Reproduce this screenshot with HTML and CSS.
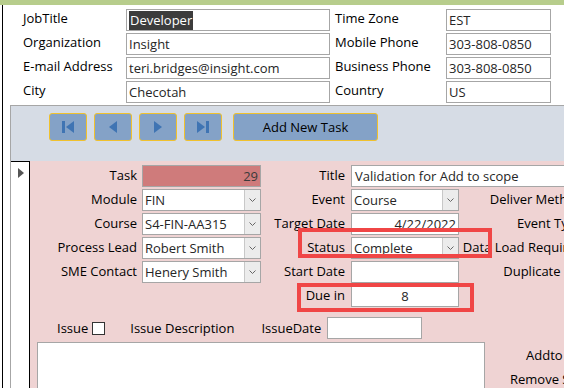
FILE: index.html
```html
<!DOCTYPE html>
<html lang="en">
<head>
  <meta charset="UTF-8">
  <title>Contact Tasks</title>
  <link rel="stylesheet" href="styles.css">
</head>
<body>
  <div class="topbar"></div>
  <div class="window">

    <!-- Contact details -->
    <div class="contact">
      <div class="label">JobTitle</div>
      <div class="field"><span class="selected">Developer</span></div>
      <div class="label label-right">Time Zone</div>
      <div class="field">EST</div>

      <div class="label">Organization</div>
      <div class="field">Insight</div>
      <div class="label label-right">Mobile Phone</div>
      <div class="field">303-808-0850</div>

      <div class="label">E-mail Address</div>
      <div class="field">teri.bridges@insight.com</div>
      <div class="label label-right">Business Phone</div>
      <div class="field">303-808-0850</div>

      <div class="label">City</div>
      <div class="field">Checotah</div>
      <div class="label label-right">Country</div>
      <div class="field">US</div>
    </div>

    <div class="task-panel">
      <!-- Navigation buttons -->
      <div class="nav-band">
        <button class="nav-btn">
          <svg width="12" height="12" viewBox="0 0 12 12"><rect x="0" y="0" width="3" height="12"/><polygon points="12,0 12,12 4,6"/></svg>
        </button>
        <button class="nav-btn">
          <svg width="8" height="12" viewBox="0 0 8 12"><polygon points="8,0 8,12 0,6"/></svg>
        </button>
        <button class="nav-btn">
          <svg width="8" height="12" viewBox="0 0 8 12"><polygon points="0,0 0,12 8,6"/></svg>
        </button>
        <button class="nav-btn">
          <svg width="12" height="12" viewBox="0 0 12 12"><polygon points="0,0 0,12 8,6"/><rect x="9" y="0" width="3" height="12"/></svg>
        </button>
        <button class="nav-btn add-btn">Add New Task</button>
      </div>

      <div class="record">
        <div class="selector">
          <svg width="6" height="10" viewBox="0 0 6 10"><polygon points="0,0 6,5 0,10"/></svg>
        </div>

        <div class="record-body">
          <div class="task-grid">
            <div class="flabel">Task</div>
            <div class="field task-id">29</div>
            <div class="flabel mid">Title</div>
            <div class="field wide">Validation for Add to scope</div>

            <div class="flabel">Module</div>
            <div class="field combo"><span class="value">FIN</span><span class="drop"><svg width="7" height="4" viewBox="0 0 7 4"><polyline points="0.5,0.5 3.5,3.5 6.5,0.5"/></svg></span></div>
            <div class="flabel mid">Event</div>
            <div class="field combo"><span class="value">Course</span><span class="drop"><svg width="7" height="4" viewBox="0 0 7 4"><polyline points="0.5,0.5 3.5,3.5 6.5,0.5"/></svg></span></div>
            <div class="flabel far">Deliver Method</div>

            <div class="flabel">Course</div>
            <div class="field combo"><span class="value">S4-FIN-AA315</span><span class="drop"><svg width="7" height="4" viewBox="0 0 7 4"><polyline points="0.5,0.5 3.5,3.5 6.5,0.5"/></svg></span></div>
            <div class="flabel mid">Target Date</div>
            <div class="field right">4/22/2022</div>
            <div class="flabel far">Event Type</div>

            <div class="flabel">Process Lead</div>
            <div class="field combo"><span class="value">Robert Smith</span><span class="drop"><svg width="7" height="4" viewBox="0 0 7 4"><polyline points="0.5,0.5 3.5,3.5 6.5,0.5"/></svg></span></div>
            <div class="flabel mid">Status</div>
            <div class="field combo"><span class="value">Complete</span><span class="drop"><svg width="7" height="4" viewBox="0 0 7 4"><polyline points="0.5,0.5 3.5,3.5 6.5,0.5"/></svg></span></div>
            <div class="flabel far">Data Load Required</div>

            <div class="flabel">SME Contact</div>
            <div class="field combo"><span class="value">Henery Smith</span><span class="drop"><svg width="7" height="4" viewBox="0 0 7 4"><polyline points="0.5,0.5 3.5,3.5 6.5,0.5"/></svg></span></div>
            <div class="flabel mid">Start Date</div>
            <div class="field"></div>
            <div class="flabel far">Duplicate Set</div>

            <div class="flabel"></div>
            <div></div>
            <div class="flabel mid">Due in</div>
            <div class="field center">8</div>
          </div>

          <div class="issue-row">
            <span class="issue-label">Issue</span>
            <span class="checkbox"></span>
            <span class="issue-desc">Issue Description</span>
            <span class="issue-date">IssueDate</span>
            <div class="field date-box"></div>
          </div>

          <div class="memo-row">
            <div class="memo"></div>
            <div class="side-links">
              <div class="addto">Addto Scope</div>
              <div class="remove">Remove Scope</div>
            </div>
          </div>

          <!-- annotation boxes drawn over the form -->
          <div class="mark mark-status"></div>
          <div class="mark mark-due"></div>
        </div>
      </div>
    </div>
  </div>
</body>
</html>
```

FILE: styles.css
```css
/* Access style task form */
body {
  margin: 0;
  width: 564px;
  height: 388px;
  overflow: hidden;
  background-color: #fff;
  font-family: "Open Sans", "Noto Sans", sans-serif;
  font-size: 13px;
  color: #000;
}

.topbar {
  height: 5px;
  background-color: #b7cd8c;
}

.window {
  margin-left: 2px;
  border-left: 1px solid #000;
  height: 383px;
}

/* contact block */
.contact {
  display: grid;
  grid-template-columns: 103px 204px 116px 105px;
  grid-auto-rows: 22px;
  row-gap: 2px;
  padding: 4px 0 0 20px;
  margin-bottom: 2px;
}

.label {
  line-height: 19px;
  white-space: nowrap;
}

.label-right {
  padding-left: 5px;
}

.field {
  box-sizing: border-box;
  background-color: #fff;
  border: 1px solid #a6a6a6;
  padding: 0 2px;
  line-height: 20px;
  color: #262626;
  white-space: nowrap;
  overflow: hidden;
}

.selected {
  background-color: #3c3c3c;
  color: #fff;
  padding: 0 1px;
  display: inline-block;
  line-height: 19px;
}

/* task panel */
.task-panel {
  margin-left: 7px;
  border-left: 1px solid #a6a6a6;
  border-top: 1px solid #a6a6a6;
}

.nav-band {
  display: flex;
  gap: 7px;
  height: 55px;
  box-sizing: border-box;
  padding: 7px 0 0 38px;
  background-color: #d6dce5;
}

.nav-btn {
  width: 38px;
  height: 28px;
  padding: 0;
  display: flex;
  justify-content: center;
  align-items: center;
  background-color: #84a2c7;
  border: 1px solid #f0c12d;
  border-radius: 3px;
  fill: #3f74b3;
}

.add-btn {
  width: 145px;
  margin-left: 4px;
  font-family: inherit;
  font-size: 13px;
  color: #000;
}

.record {
  display: flex;
  height: 227px;
}

.selector {
  width: 19px;
  box-sizing: border-box;
  padding: 2px 0 0 7px;
  background-color: #fff;
  border-top: 1px solid #000;
  border-right: 1px solid #000;
  fill: #555;
}

.record-body {
  flex: 1;
  position: relative;
  background-color: #efd3d3;
  padding-top: 4px;
  overflow: hidden;
}

.task-grid {
  display: grid;
  grid-template-columns: 112px 119px 90px 108px 124px;
  grid-auto-rows: 22px;
  row-gap: 2px;
}

.flabel {
  text-align: right;
  padding-right: 5px;
  line-height: 21px;
  white-space: nowrap;
}

.flabel.mid {
  padding-right: 6px;
}

.flabel.far {
  padding-right: 0;
}

.task-id {
  background-color: #cf7b7b;
  text-align: right;
  color: #3a3a3a;
}

.wide {
  grid-column: 4 / 6;
  padding-left: 3px;
}

.right {
  text-align: right;
}

.center {
  text-align: center;
}

.combo {
  display: flex;
  padding-right: 0;
}

.combo .value {
  flex: 1;
}

.drop {
  width: 15px;
  display: flex;
  justify-content: center;
  align-items: center;
  background-color: #ececec;
  border-left: 1px solid #c8c8c8;
}

.drop svg {
  fill: none;
  stroke: #666;
  stroke-width: 1;
}

/* issue line */
.issue-row {
  display: flex;
  align-items: center;
  height: 22px;
  margin-top: 10px;
  padding-left: 27px;
}

.checkbox {
  width: 11px;
  height: 11px;
  margin-left: 4px;
  background-color: #fff;
  border: 1px solid #333;
}

.issue-desc {
  margin-left: 25px;
}

.issue-date {
  margin-left: 27px;
}

.date-box {
  width: 95px;
  height: 22px;
  margin-left: 6px;
}

.memo-row {
  display: flex;
  margin-top: 3px;
}

.memo {
  flex-shrink: 0;
  width: 448px;
  height: 60px;
  margin-left: 7px;
  box-sizing: border-box;
  background-color: #fff;
  border: 1px solid #a6a6a6;
}

.side-links {
  flex-shrink: 0;
  display: flex;
  flex-direction: column;
  white-space: nowrap;
}

.addto {
  margin: 3px 0 0 41px;
  line-height: 20px;
}

.remove {
  margin: 4px 0 0 25px;
  line-height: 20px;
}

.mark {
  position: absolute;
  border: 4px solid #f04646;
  box-sizing: border-box;
}

.mark-status {
  left: 268px;
  top: 67px;
  width: 194px;
  height: 30px;
}

.mark-due {
  left: 267px;
  top: 122px;
  width: 177px;
  height: 29px;
}
```
